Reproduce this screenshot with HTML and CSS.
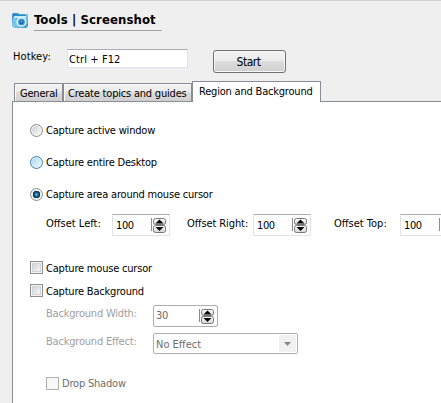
FILE: index.html
```html
<!DOCTYPE html>
<html lang="en">
<head>
<meta charset="utf-8">
<title>Tools | Screenshot</title>
<link rel="stylesheet" href="styles.css">
</head>
<body>
<svg class="defs" width="0" height="0">
  <defs>
    <linearGradient id="key" x2="0" y2="1"><stop stop-color="#fff"/><stop offset="1" stop-color="#d4d4d4"/></linearGradient>
    <linearGradient id="cam" x2="1" y2="1"><stop stop-color="#1878b8"/><stop offset=".45" stop-color="#8bd3f3"/><stop offset="1" stop-color="#2a90ce"/></linearGradient>
    <symbol id="spin" viewBox="0 0 16 17">
      <path d="M.5 1v13" stroke="#8c8c8c"/>
      <rect x="2.500" y="1.500" width="12" height="6" rx="2" fill="url(#key)" stroke="#777"/>
      <rect x="2.500" y="8.500" width="12" height="7" rx="2" fill="url(#key)" stroke="#777"/>
      <path d="M4.500 6.500h8L8.500 2.500zM4.500 10h8l-4 4z" fill="#000"/>
    </symbol>
  </defs>
</svg>
<header class="head">
  <svg class="logo" width="17" height="17" viewBox="0 0 17 17">
    <path d="M0 3l1-2h5l1 1h8l1-1v13l-2 2H2l-2-2z" fill="url(#cam)"/>
    <path d="M1 1.500h4l1 1h8V4H1z" fill="#2a8cc8"/>
    <path d="M2 4h12v2H2z" fill="#c4eafb"/>
    <path d="M1 6h3v9H2l-1-2z" fill="#75c5e9"/>
    <circle cx="9.500" cy="10" r="5" fill="#e2f5fd"/>
    <circle cx="9.500" cy="10" r="3.500" fill="#4aa0d4"/>
    <circle cx="9.500" cy="10" r="2.200" fill="#1566a6"/>
    <circle cx="9.500" cy="9.500" r="1" fill="#5cb8e4"/>
  </svg>
  <h1 class="title">Tools | Screenshot</h1>
</header>
<div class="hotkey">
  <span class="hk-label">Hotkey:</span>
  <div class="field hk-field">Ctrl + F12</div>
  <div class="start"><span>Start</span></div>
</div>
<nav class="tabs">
  <div class="tab general"><span>General</span></div>
  <div class="tab create"><span>Create topics and guides</span></div>
  <div class="tab active"><span>Region and Background</span></div>
</nav>
<main class="panel">
  <div class="row radio-row"><i class="radio"></i><span>Capture active window</span></div>
  <div class="row radio-row"><i class="radio hot"></i><span>Capture entire Desktop</span></div>
  <div class="row radio-row"><i class="radio on"></i><span>Capture area around mouse cursor</span></div>
  <div class="offsets">
    <span class="off-left">Offset Left:</span>
    <div class="field spin"><span>100</span><svg width="16" height="17"><use href="#spin"/></svg></div>
    <span class="off-right">Offset Right:</span>
    <div class="field spin"><span>100</span><svg width="16" height="17"><use href="#spin"/></svg></div>
    <span class="off-top">Offset Top:</span>
    <div class="field spin"><span>100</span><svg width="16" height="17"><use href="#spin"/></svg></div>
  </div>
  <div class="row check-row"><i class="check"></i><span>Capture mouse cursor</span></div>
  <div class="row check-row"><i class="check"></i><span>Capture Background</span></div>
  <div class="option width-row">
    <span class="opt-label">Background Width:</span>
    <div class="box num"><span>30</span><svg width="16" height="17"><use href="#spin"/></svg></div>
  </div>
  <div class="option effect-row">
    <span class="opt-label">Background Effect:</span>
    <div class="box select"><span>No Effect</span><div class="drop"><svg width="7" height="4"><path d="M0 0h7L3.500 4z" fill="#888"/></svg></div></div>
  </div>
  <div class="row shadow-row"><i class="check off"></i><span>Drop Shadow</span></div>
</main>
</body>
</html>
```
FILE: styles.css
```css
* { box-sizing: border-box; }
body {
  margin: 0;
  width: 441px;
  height: 403px;
  overflow: hidden;
  background: #efefef;
  border-top: 1px solid #d2d2d2;
  color: #000;
  font: 11px/14px "DejaVu Sans Condensed", "DejaVu Sans", sans-serif;
  font-stretch: condensed;
  letter-spacing: -.2px;
  white-space: nowrap;
}
.defs { display: block; height: 0; }
svg { display: block; flex: none; }
.head { display: flex; height: 48px; padding: 11px 0 0 12px; }
.title {
  width: 128px;
  height: 19px;
  margin: 0 0 0 5px;
  border-bottom: 1px solid #a0a0a0;
  font: bold 13px/16px "DejaVu Sans Condensed", "DejaVu Sans", sans-serif;
  font-stretch: condensed;
  letter-spacing: .1px;
}
.hotkey { display: flex; height: 32px; padding-left: 13px; letter-spacing: .1px; }
.hk-label { width: 54px; padding-top: 1px; }
.field { background: #fff; border: 1px solid #e2e3ea; border-top-color: #abadb3; }
.hk-field { width: 121px; height: 19px; padding: 3px 1px 0; }
.start {
  width: 73px;
  height: 23px;
  margin: 1px 0 0 25px;
  border: 1px solid #707070;
  border-radius: 3px;
  background: linear-gradient(#f2f2f2, #ebebeb 49%, #ddd 50%, #cfcfcf);
  box-shadow: inset 0 0 0 1px #f8f8f8;
  text-align: center;
  line-height: 22px;
  font-size: 12px;
  letter-spacing: -.5px;
  padding-right: 2px;
}
.tabs { display: flex; align-items: flex-end; height: 20px; padding-left: 14px; position: relative; }
.tab {
  height: 18px;
  border: 1px solid #898c95;
  border-bottom: 0;
  background: linear-gradient(#f2f2f2, #ebebeb 49%, #ddd 50%, #cfcfcf);
  box-shadow: inset 1px 1px #fafafa;
  padding: 3px 0 0 5px;
}
.general { width: 49px; }
.create { width: 129px; padding-left: 4px; }
.tab.active { width: 129px; height: 21px; margin-bottom: -1px; padding: 3px 0 0 6px; background: #fff; box-shadow: none; }
.panel {
  width: 440px;
  height: 310px;
  margin-left: 12px;
  padding-top: 21px;
  background: #fff;
  border: 1px solid #898c95;
}
.row { display: flex; align-items: center; height: 14px; padding-left: 17px; gap: 3px; }
.row span { padding-top: 2px; }
.radio-row { margin-bottom: 18px; }
.radio {
  width: 13px;
  height: 13px;
  border: 1px solid #8e8f8f;
  border-radius: 50%;
  background: linear-gradient(135deg, #c4c8ce, #f6f6f6 80%);
  box-shadow: inset 0 0 0 1px #f4f4f4;
}
.hot { border-color: #3c7fb1; background: linear-gradient(135deg, #9ed4f5, #e8f7fe 80%); box-shadow: inset 0 0 0 1px #def2fc; }
.on { background: radial-gradient(circle at 5.5px 5.5px, #68c1e6 0, #175d86 2px, #0b304d 3.5px, #e8e8e8 4px); }
.offsets { display: flex; height: 46px; margin-top: -5px; padding-left: 33px; }
.offsets > * { flex: none; }
.offsets > span { padding-top: 3px; letter-spacing: 0; }
.off-left { width: 66px; }
.offsets > .off-right { width: 66px; margin-left: 17px; letter-spacing: -.1px; }
.off-top { width: 66px; margin-left: 23px; }
.spin { display: flex; justify-content: space-between; width: 58px; height: 22px; padding: 2px 2px 0 3px; }
.spin span { padding-top: 2px; letter-spacing: -.4px; }
.check-row { margin-bottom: 9px; }
.row.check-row span { padding-top: 3px; }
.check {
  width: 13px;
  height: 13px;
  border: 1px solid #8e8f8f;
  background: linear-gradient(135deg, #c6cbd3, #f7f7f7 85%);
  box-shadow: inset 0 0 0 1px #f4f4f4, inset 0 0 0 2px #d3d5d9;
}
.option { display: flex; padding-left: 33px; height: 28px; color: #a0a0a0; }
.width-row { margin-top: -1px; }
.opt-label { width: 107px; padding-top: 2px; }
.box { display: flex; justify-content: space-between; border: 1px solid #afafaf; border-radius: 2px; color: #6d6d6d; }
.num { width: 65px; height: 22px; padding: 2px 2px 0; letter-spacing: -.4px; }
.num span { padding-top: 1px; }
.select { width: 145px; height: 21px; padding: 1px 1px 1px 2px; line-height: 19px; letter-spacing: 0; }
.drop { display: flex; align-items: center; justify-content: center; width: 17px; background: #f1f1f1; }
.shadow-row { margin-top: 15px; padding-left: 33px; color: #6d6d6d; }
.off { border-color: #b1b1b1; background: #f7f7f7; box-shadow: none; }
```
